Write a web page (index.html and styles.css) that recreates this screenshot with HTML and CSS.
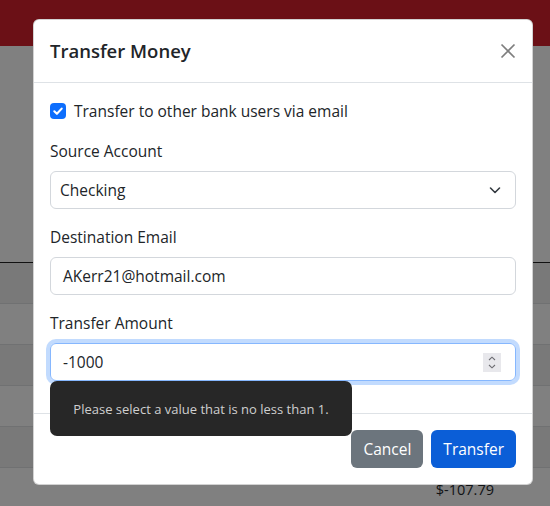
FILE: index.html
```html
<!DOCTYPE html>
<html lang="en">
<head>
<meta charset="utf-8">
<title>Transfer Money</title>
<link rel="stylesheet" href="styles.css">
</head>
<body>
<div class="page">
  <header class="navbar"></header>
  <main class="content">
    <div class="table">
      <div class="thead"></div>
      <div class="trow striped"></div>
      <div class="trow"></div>
      <div class="trow striped"></div>
      <div class="trow"></div>
      <div class="trow striped"></div>
    </div>
    <div class="total">$-107.79</div>
  </main>
</div>

<div class="modal">
  <div class="modal-header">
    <h5 class="modal-title">Transfer Money</h5>
    <button class="btn-close" aria-label="Close">
      <svg viewBox="0 0 16 16" width="16" height="16"><path d="M1.5 1.5 L14.5 14.5 M14.5 1.5 L1.5 14.5" stroke="#000" stroke-width="1.7" fill="none"/></svg>
    </button>
  </div>
  <div class="modal-body">
    <div class="form-check">
      <span class="check">
        <svg viewBox="0 0 16 16" width="16" height="16"><path d="M4.3 8.3 L6.9 10.8 L11.7 5.6" stroke="#fff" stroke-width="2.1" fill="none" stroke-linecap="round" stroke-linejoin="round"/></svg>
      </span>
      <label>Transfer to other bank users via email</label>
    </div>
    <div class="field">
      <label class="form-label">Source Account</label>
      <div class="form-control select">
        <span class="sel-text">Checking</span>
        <svg class="chev" viewBox="0 0 16 16" width="16" height="16"><path d="M3.5 6 L8 10.5 L12.5 6" stroke="#343a40" stroke-width="1.6" fill="none" stroke-linecap="round" stroke-linejoin="round"/></svg>
      </div>
    </div>
    <div class="field">
      <label class="form-label">Destination Email</label>
      <div class="form-control">AKerr21@hotmail.com</div>
    </div>
    <div class="field">
      <label class="form-label">Transfer Amount</label>
      <div class="form-control focus">
        <span>-1000</span>
        <span class="spin">
          <svg viewBox="0 0 18 19" width="18" height="19"><path d="M6 7 L9 4.2 L12 7 M6 12 L9 14.8 L12 12" stroke="#6d6d72" stroke-width="1.1" fill="none"/></svg>
        </span>
      </div>
    </div>
  </div>
  <div class="modal-footer">
    <button class="btn btn-secondary">Cancel</button>
    <button class="btn btn-primary">Transfer</button>
  </div>
  <div class="bubble">Please select a value that is no less than 1.</div>
</div>
</body>
</html>
```
FILE: styles.css
```css
*{box-sizing:border-box}
html,body{margin:0;padding:0}
body{
  font-family:"Open Sans","Noto Sans",sans-serif;
  font-size:15.5px;
  line-height:24px;
  color:#212529;
  background:#808080;
  width:550px;
  height:506px;
  overflow:hidden;
  position:relative;
}
.navbar{height:46px;background:#6b1016}
.content{padding-top:176px}
.thead{height:41px;border-bottom:1px solid #111}
.trow{height:41px;border-bottom:1px solid #707172;background:#808080}
.trow.striped{background:#797979}
.total{
  text-align:right;
  padding-right:56px;
  padding-top:10px;
  color:#111315;
  font-size:14.5px;
}

.modal{
  position:absolute;
  left:33px;
  top:19px;
  width:500px;
  background:#fff;
  border:1px solid rgba(0,0,0,.175);
  border-radius:6px;
}
.modal-header{
  display:flex;
  align-items:center;
  justify-content:space-between;
  padding:16px;
  border-bottom:1px solid #dee2e6;
}
.modal-title{
  margin:0;
  font-size:18.5px;
  font-weight:600;
  line-height:30px;
}
.btn-close{
  border:0;
  background:none;
  padding:0;
  width:16px;
  height:16px;
  opacity:.5;
  display:block;
}
.btn-close svg{display:block}
.modal-body{
  padding:16px 16px 32px;
  display:flex;
  flex-direction:column;
  gap:16px;
}
.form-check{
  display:flex;
  align-items:center;
  gap:8px;
  height:24px;
}
.check{
  width:16px;
  height:16px;
  border-radius:4px;
  background:#0d6efd;
  display:block;
}
.check svg{display:block}
.form-label{display:block;margin-bottom:8px}
.form-control{
  height:38px;
  border:1px solid #d3d7dc;
  border-radius:6px;
  padding:0 12px;
  display:flex;
  align-items:center;
  justify-content:space-between;
}
.select{padding-left:9px;padding-right:12px}
.chev{display:block}
.focus{
  border-color:#86b7fe;
  box-shadow:0 0 0 4px rgba(13,110,253,.25);
}
.spin{
  width:18px;
  height:19px;
  background:#e8e8ec;
  display:block;
  margin-right:2px;
}
.spin svg{display:block}
.modal-footer{
  border-top:1px solid #dee2e6;
  padding:16px;
  display:flex;
  justify-content:flex-end;
  gap:8px;
}
.btn{
  font-family:inherit;
  font-size:15.5px;
  line-height:24px;
  height:38px;
  padding:0 12px;
  border:0;
  border-radius:6px;
  color:#fff;
}
.btn-secondary{background:#6c757d}
.btn-primary{background:#0b5ed7}
.bubble{
  position:absolute;
  left:16px;
  top:361px;
  width:302px;
  height:55px;
  background:#272727;
  border-radius:7px;
  color:#cfcfcf;
  font-size:13px;
  display:flex;
  align-items:center;
  justify-content:center;
}
```
